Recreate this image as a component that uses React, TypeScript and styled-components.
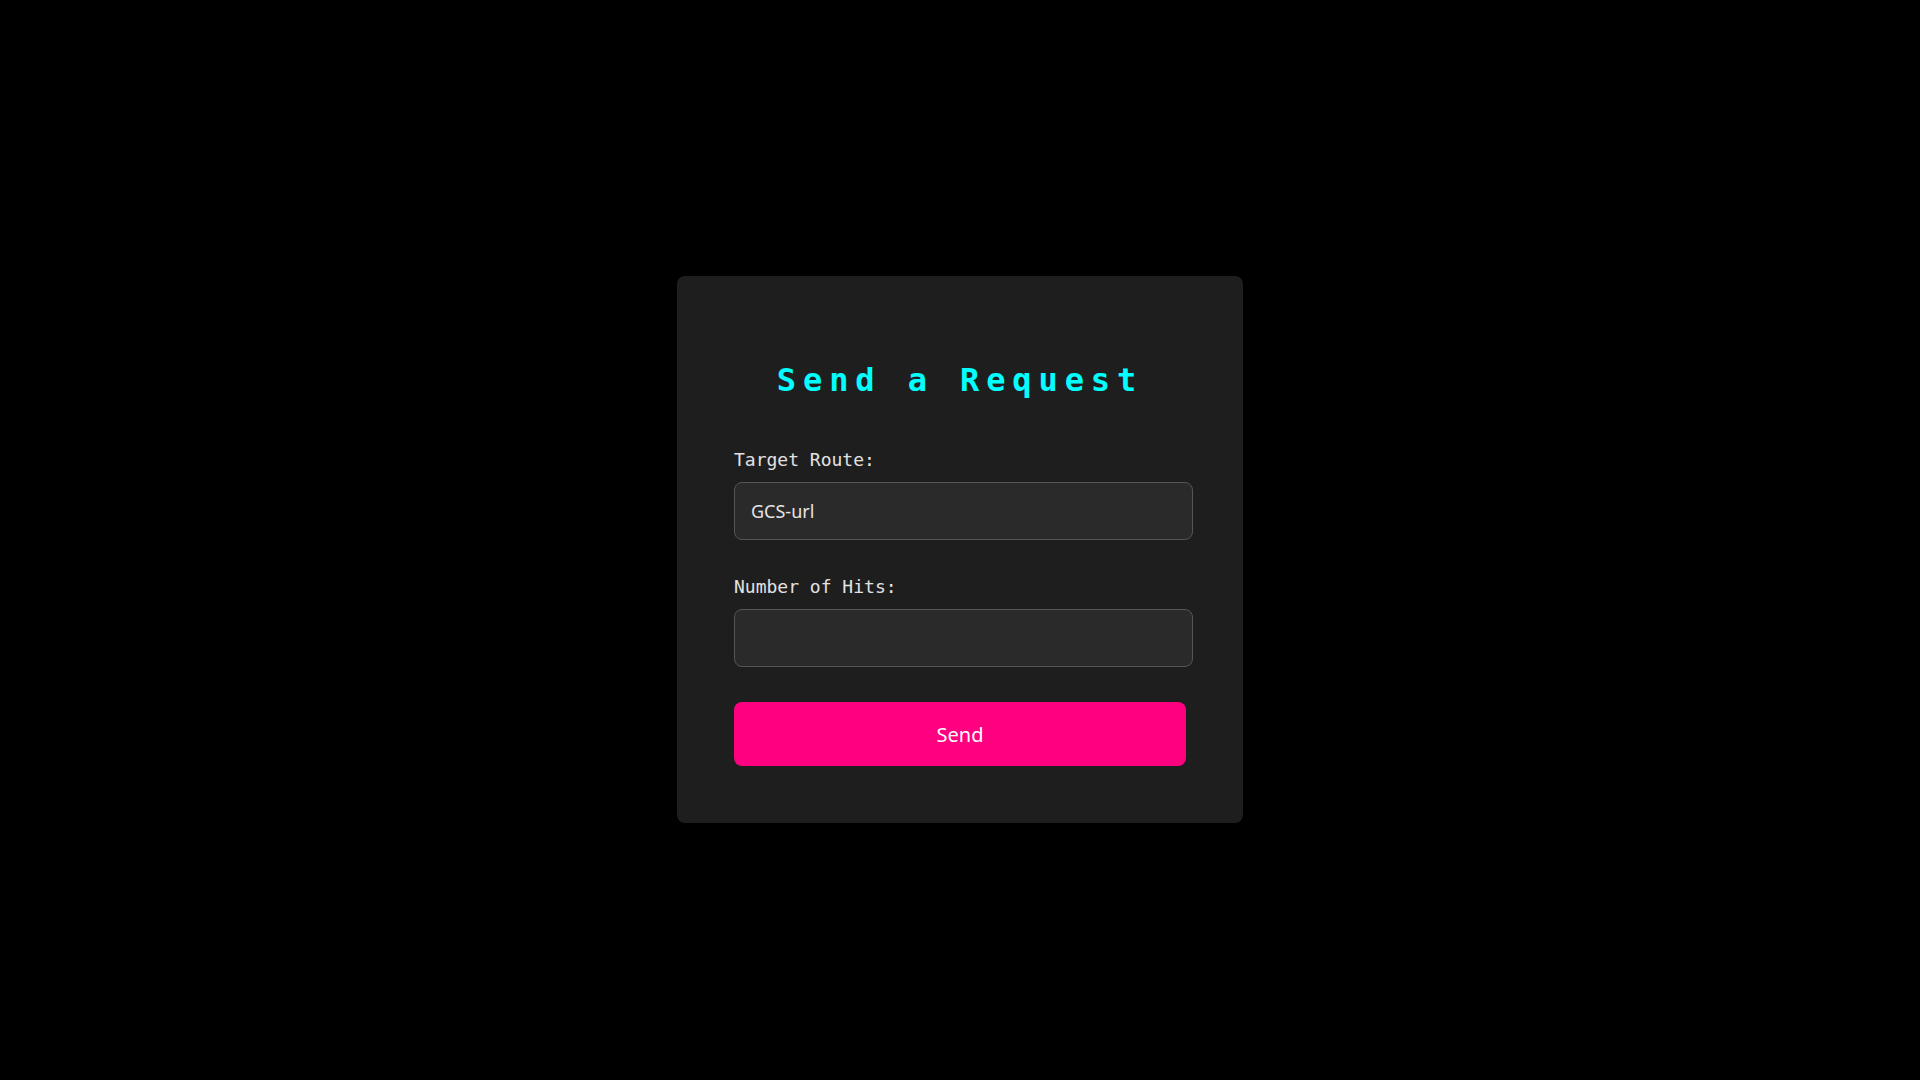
import React from "react";
import styled, { createGlobalStyle } from "styled-components";

const GlobalStyle = createGlobalStyle`
  html, body {
    background: #000000;
  }
  body {
    margin: 8px;
    font-family: "DejaVu Sans Mono", "Liberation Mono", monospace;
  }
  * {
    box-sizing: border-box;
  }
`;

const Page = styled.main`
  min-height: 100vh;
  display: flex;
  align-items: center;
  justify-content: center;
  padding-top: 3px;
`;

const Card = styled.form`
  width: 566px;
  background: #1e1e1e;
  border-radius: 8px;
  padding: 57px;
  display: flex;
  flex-direction: column;
`;

const Title = styled.h1`
  margin: 27px 0 50px;
  font-family: "DejaVu Sans Mono", "Liberation Mono", monospace;
  font-size: 32px;
  line-height: 40px;
  font-weight: 700;
  letter-spacing: 6.9px;
  color: #00ffff;
  text-align: center;
`;

const Field = styled.div<{ $gap: number }>`
  display: flex;
  flex-direction: column;
  margin-bottom: ${(p) => p.$gap}px;
`;

const Label = styled.label`
  font-family: "DejaVu Sans Mono", "Liberation Mono", monospace;
  font-size: 18px;
  line-height: 20px;
  color: #e2e2e2;
  margin-bottom: 12px;
`;

const Input = styled.input`
  width: calc(100% + 7px);
  height: 58px;
  padding: 0 16px;
  background: #2a2a2a;
  border: 1px solid #555555;
  border-radius: 8px;
  color: #e4e4e4;
  font-family: "Noto Sans", "Open Sans", sans-serif;
  font-size: 18px;
  outline: none;
`;

const SendButton = styled.button`
  width: 100%;
  height: 64px;
  border: none;
  border-radius: 8px;
  background: #ff0080;
  color: #ffffff;
  font-family: "Noto Sans", "Open Sans", sans-serif;
  font-size: 20px;
  cursor: pointer;
`;

export default function App() {
  return (
    <>
      <GlobalStyle />
      <Page>
        <Card onSubmit={(e) => e.preventDefault()}>
          <Title>Send a Request</Title>
          <Field $gap={37}>
            <Label htmlFor="route">Target Route:</Label>
            <Input id="route" type="text" defaultValue="GCS-url" />
          </Field>
          <Field $gap={35}>
            <Label htmlFor="hits">Number of Hits:</Label>
            <Input id="hits" type="text" />
          </Field>
          <SendButton type="submit">Send</SendButton>
        </Card>
      </Page>
    </>
  );
}
